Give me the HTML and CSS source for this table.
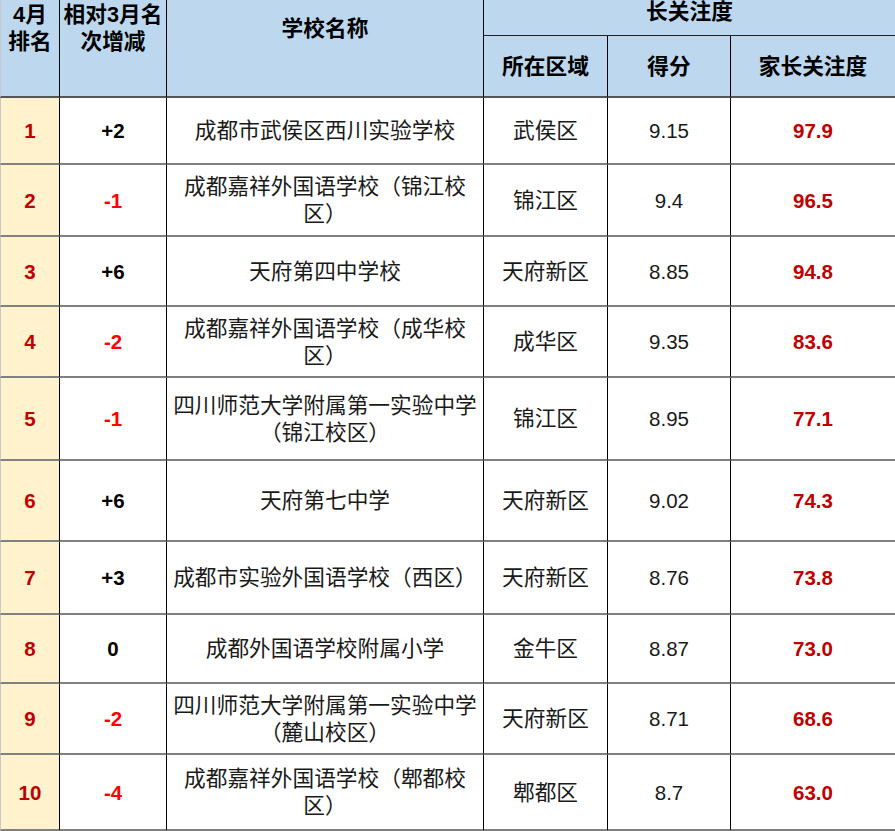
FILE: index.html
```html
<!DOCTYPE html>
<html lang="zh-CN">
<head>
<meta charset="utf-8">
<title>4月排名</title>
<link rel="stylesheet" href="styles.css">
</head>
<body>
<div class="sheet">
  <div class="c h first span2">4月<br>排名</div>
  <div class="c h span2">相对3月名<br>次增减</div>
  <div class="c h span2">学校名称</div>
  <div class="c h group">长关注度</div>
  <div class="c h">所在区域</div>
  <div class="c h">得分</div>
  <div class="c h last">家长关注度</div>

  <div class="c first rank">1</div>
  <div class="c num up">+2</div>
  <div class="c zh">成都市武侯区西川实验学校</div>
  <div class="c zh">武侯区</div>
  <div class="c num">9.15</div>
  <div class="c num att last">97.9</div>

  <div class="c first rank">2</div>
  <div class="c num down">-1</div>
  <div class="c zh">成都嘉祥外国语学校（锦江校区）</div>
  <div class="c zh">锦江区</div>
  <div class="c num">9.4</div>
  <div class="c num att last">96.5</div>

  <div class="c first rank">3</div>
  <div class="c num up">+6</div>
  <div class="c zh">天府第四中学校</div>
  <div class="c zh">天府新区</div>
  <div class="c num">8.85</div>
  <div class="c num att last">94.8</div>

  <div class="c first rank">4</div>
  <div class="c num down">-2</div>
  <div class="c zh">成都嘉祥外国语学校（成华校区）</div>
  <div class="c zh">成华区</div>
  <div class="c num">9.35</div>
  <div class="c num att last">83.6</div>

  <div class="c first rank">5</div>
  <div class="c num down">-1</div>
  <div class="c zh">四川师范大学附属第一实验中学（锦江校区）</div>
  <div class="c zh">锦江区</div>
  <div class="c num">8.95</div>
  <div class="c num att last">77.1</div>

  <div class="c first rank">6</div>
  <div class="c num up">+6</div>
  <div class="c zh">天府第七中学</div>
  <div class="c zh">天府新区</div>
  <div class="c num">9.02</div>
  <div class="c num att last">74.3</div>

  <div class="c first rank">7</div>
  <div class="c num up">+3</div>
  <div class="c zh">成都市实验外国语学校（西区）</div>
  <div class="c zh">天府新区</div>
  <div class="c num">8.76</div>
  <div class="c num att last">73.8</div>

  <div class="c first rank">8</div>
  <div class="c num up">0</div>
  <div class="c zh">成都外国语学校附属小学</div>
  <div class="c zh">金牛区</div>
  <div class="c num">8.87</div>
  <div class="c num att last">73.0</div>

  <div class="c first rank">9</div>
  <div class="c num down">-2</div>
  <div class="c zh">四川师范大学附属第一实验中学（麓山校区）</div>
  <div class="c zh">天府新区</div>
  <div class="c num">8.71</div>
  <div class="c num att last">68.6</div>

  <div class="c first rank">10</div>
  <div class="c num down">-4</div>
  <div class="c zh">成都嘉祥外国语学校（郫都校区）</div>
  <div class="c zh">郫都区</div>
  <div class="c num">8.7</div>
  <div class="c num att last">63.0</div>
</div>
</body>
</html>
```
FILE: styles.css
```css
html, body {
  margin: 0;
  padding: 0;
  background: #ffffff;
}

.sheet {
  display: grid;
  width: 895px;
  grid-template-columns: 60px 107px 317px 124px 123px 164px;
  grid-template-rows: 36px 62px 67px 72px 70px 71px 83px 81px 73px 69px 71px 76px;
  font-family: "Liberation Sans", "Noto Sans CJK SC", sans-serif;
}

.c {
  box-sizing: border-box;
  display: flex;
  align-items: center;
  justify-content: center;
  text-align: center;
  border-right: 1px solid #000000;
  border-bottom: 2px solid #808080;
  line-height: 27px;
  color: #1a1a1a;
  overflow: hidden;
}

.c.last {
  border-right: none;
}

.c.first {
  border-left: 1px solid #c8c8c8;
}

.h {
  background: #bdd7ee;
  font-weight: bold;
  font-size: 21.7px;
  color: #000000;
  border-bottom-color: #555555;
}

.span2 {
  grid-row: 1 / 3;
  padding-bottom: 40px;
}

.group {
  grid-column: 4 / 7;
  border-right: none;
  border-bottom: 1px solid #222222;
  line-height: 22px;
  padding-bottom: 12px;
}

.rank {
  background: #fff2cc;
  color: #c00000;
  font-weight: bold;
  font-size: 20.5px;
}

.zh {
  font-size: 21.7px;
  padding: 0 4px;
}

.num {
  font-size: 20.5px;
}

.up {
  font-weight: bold;
  color: #000000;
}

.down {
  font-weight: bold;
  color: #ff0000;
}

.att {
  font-weight: bold;
  color: #c00000;
}
```
